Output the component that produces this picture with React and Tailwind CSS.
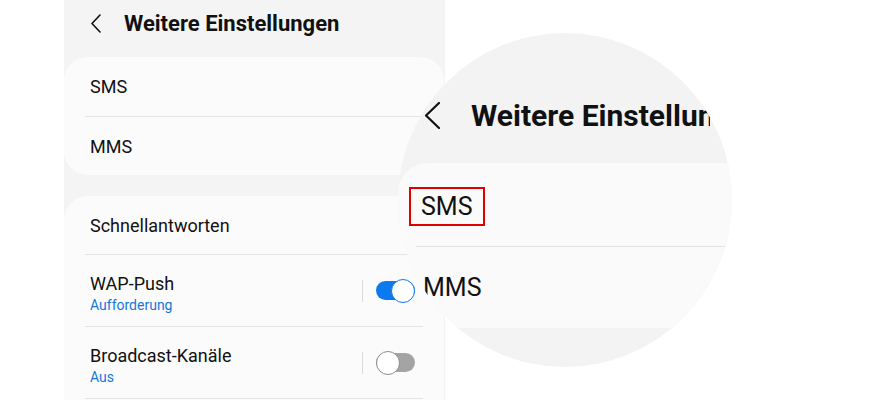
import React from 'react';

const font = { fontFamily: 'Roboto, "Noto Sans", sans-serif' };

const Chevron = ({ w, h, stroke }) => (
    <svg width={w} height={h} viewBox={`0 0 ${w} ${h}`} fill="none" className="shrink-0">
        <polyline
            points={`${w - 1},1 1,${h / 2} ${w - 1},${h - 1}`}
            stroke="#111"
            strokeWidth={stroke}
            strokeLinecap="round"
            strokeLinejoin="round"
        />
    </svg>
);

const Toggle = ({ on }) => (
    <div className="relative w-[39px] h-[24px] flex items-center">
        <div className={`w-[39px] h-[19px] rounded-full ${on ? 'bg-[#0d79ee]' : 'bg-[#a4a4a4]'}`} />
        <div
            className={`absolute top-0 w-[24px] h-[24px] rounded-full bg-white border-[1.5px] ${on ? 'right-0 border-[#0d79ee]' : 'left-0 border-[#8c8c8c]'}`}
        />
    </div>
);

const Divider = () => <div className="mx-[21px] h-px bg-[#e4e4e4]" />;

const SwitchRow = ({ title, sub, on }) => (
    <div className="h-[71px] flex items-center pl-[26px] pr-[29px]">
        <div className="flex-1 flex flex-col pt-[6px]">
            <span className="text-[18px] leading-[22px] text-[#111]">{title}</span>
            <span className="text-[14px] leading-[18px] text-[#1677d9] mt-[1px]">{sub}</span>
        </div>
        <div className="w-px h-[22px] bg-[#d9d9d9] mr-[13px]" />
        <Toggle on={on} />
    </div>
);

export default function App() {
    return (
        <div className="relative w-[879px] h-[400px] bg-white overflow-hidden" style={font}>
            <div className="ml-[64px] w-[381px] h-[400px] bg-[#f4f4f4] flex flex-col">
                <div className="h-[46px] flex items-center pl-[27px]">
                    <Chevron w={10} h={19} stroke={1.6} />
                    <span className="ml-[23px] text-[22px] font-bold text-[#111]">
                        Weitere Einstellungen
                    </span>
                </div>

                <div className="mt-[11px] w-[380px] rounded-[24px] bg-[#fbfbfb]">
                    <div className="h-[59px] flex items-center pl-[26px] text-[18px] text-[#111]">SMS</div>
                    <Divider />
                    <div className="h-[58px] flex items-center pl-[26px] text-[18px] text-[#111]">MMS</div>
                </div>

                <div className="mt-[21px] w-[380px] rounded-t-[24px] bg-[#fbfbfb] flex-1">
                    <div className="h-[58px] flex items-center pl-[26px] text-[18px] text-[#111]">Schnellantworten</div>
                    <Divider />
                    <SwitchRow title="WAP-Push" sub="Aufforderung" on />
                    <Divider />
                    <SwitchRow title="Broadcast-Kanäle" sub="Aus" on={false} />
                    <Divider />
                </div>
            </div>

            {/* magnifier */}
            <div className="absolute left-[398px] top-[33px] w-[334px] h-[334px] rounded-full overflow-hidden bg-[#f3f3f3] flex flex-col">
                <div className="h-[130px]">
                    <div className="mt-[68px] h-[28px] w-[312px] overflow-hidden whitespace-nowrap flex items-center pl-[27px]">
                        <Chevron w={15} h={27} stroke={2.2} />
                        <span className="ml-[31px] text-[30px] font-bold text-[#111]">
                            Weitere Einstellungen
                        </span>
                    </div>
                </div>
                <div className="h-[165px] bg-[#fafafa] rounded-l-[30px]">
                    <div className="h-[83px] flex items-center pt-[4px]">
                        <span className="ml-[11px] border-2 border-[#e10000] px-[10px] h-[39px] flex items-center text-[25px] text-[#111]">
                            SMS
                        </span>
                    </div>
                    <div className="ml-[18px] h-px bg-[#e2e2e2]" />
                    <div className="h-[81px] flex items-center pl-[25px] text-[25px] text-[#111]">MMS</div>
                </div>
            </div>
        </div>
    );
}
